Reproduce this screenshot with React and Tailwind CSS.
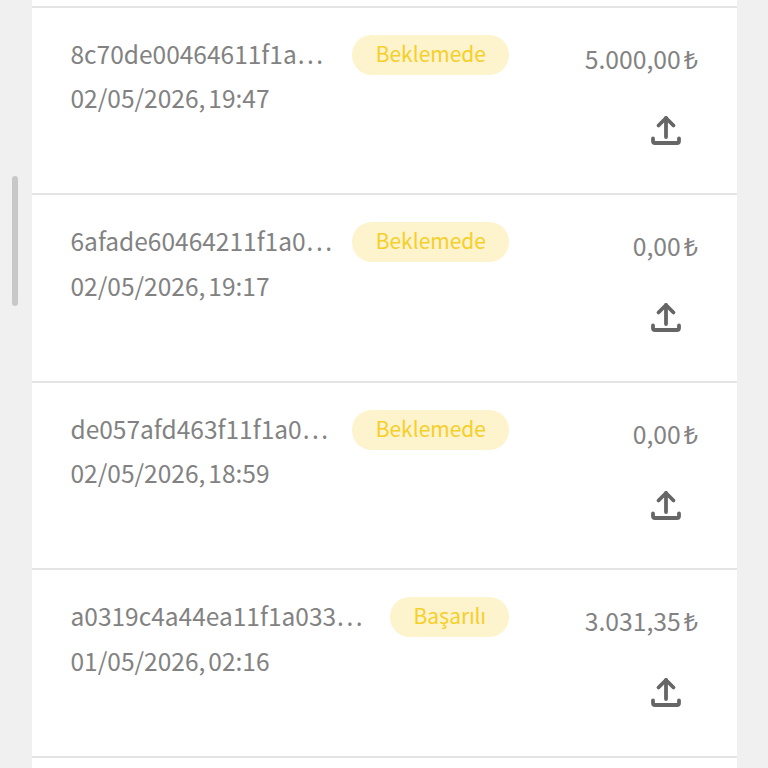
import React from 'react';

const payments = [
  { id: '8c70de00464611f1a', date: '02/05/2026, 19:47', status: 'Beklemede', amount: '5.000,00' },
  { id: '6afade60464211f1a0', date: '02/05/2026, 19:17', status: 'Beklemede', amount: '0,00' },
  { id: 'de057afd463f11f1a0', date: '02/05/2026, 18:59', status: 'Beklemede', amount: '0,00' },
  { id: 'a0319c4a44ea11f1a033', date: '01/05/2026, 02:16', status: 'Başarılı', amount: '3.031,35' },
];

function UploadIcon() {
  return (
    <svg width="32" height="32" viewBox="0 0 32 32" fill="none" stroke="#666666" strokeWidth="3.8" strokeLinecap="round" strokeLinejoin="round">
      <path d="M16 22V3" />
      <path d="M8.5 10.5L16 3L23.5 10.5" />
      <path d="M3 23.5V26C3 27.2 3.8 28 5 28H27C28.2 28 29 27.2 29 26V23.5" />
    </svg>
  );
}

function PaymentRow({ payment }) {
  return (
    <div className="h-[187.6px] border-b-2 border-[#e4e4e4] pl-[38.5px] pr-[39px] pt-[27px] flex justify-between">
      <div className="flex-1 min-w-0">
        <div className="flex items-start justify-between">
          <div className="whitespace-nowrap text-[24.5px] leading-[40px] mt-[-1px] text-[#828282]">
            {payment.id}<span className="ml-[1px] tracking-[2.5px]">...</span>
          </div>
          <span className="shrink-0 h-[40px] pl-[24px] pr-[23px] rounded-full bg-[#fdf3cd] text-[#f5cf2a] text-[21px] leading-[37px]">
            {payment.status}
          </span>
        </div>
        <div className="text-[24.5px] leading-[40px] mt-[3.5px] text-[#828282] [word-spacing:-2.5px]">{payment.date}</div>
      </div>
      <div className="w-[189px] shrink-0 flex flex-col items-end">
        <div className="text-[24.7px] leading-[40px] mt-[3px] text-[#828282]">
          {payment.amount}<span className="ml-[3px] text-[25px]">₺</span>
        </div>
        <div className="mt-[37px] mr-[16px]"><UploadIcon /></div>
      </div>
    </div>
  );
}

export default function App() {
  return (
    <div className="relative h-[768px] overflow-hidden bg-[#f0f0f0] font-['Noto_Sans_CJK_SC','Noto_Sans',sans-serif]">
      <div className="absolute left-[12px] top-[176px] w-[6px] h-[130px] rounded-full bg-[#c8c8c8]" />
      <div className="ml-[32px] w-[705px] h-full bg-white">
        <div className="h-[7.5px] border-b-2 border-[#e4e4e4]" />
        {payments.map((p) => (
          <PaymentRow key={p.date} payment={p} />
        ))}
      </div>
    </div>
  );
}
